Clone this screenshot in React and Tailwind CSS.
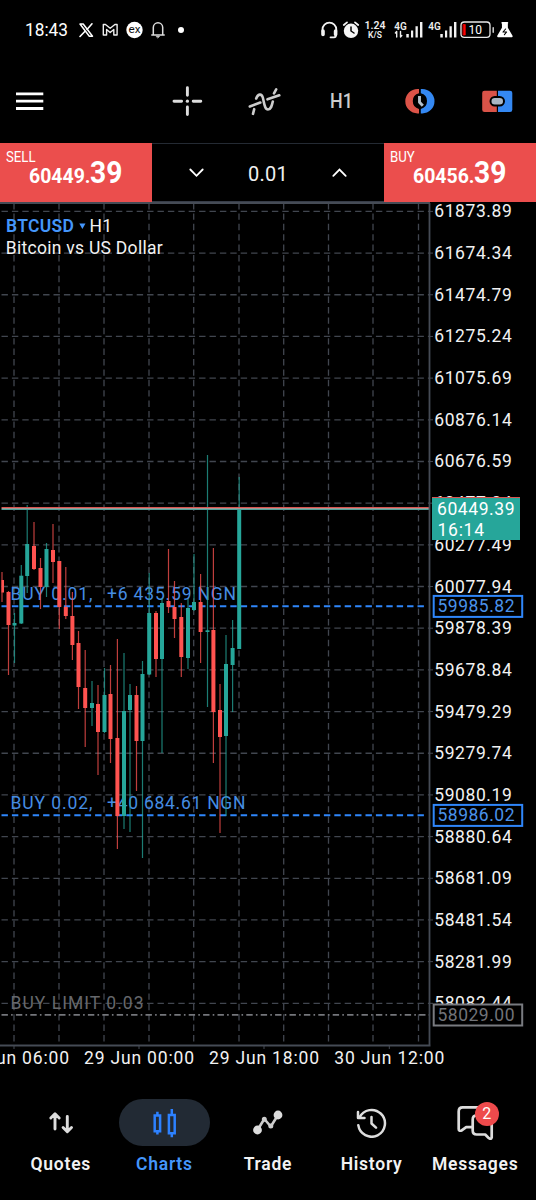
const UP = '#26a69a'
const DOWN = '#ff5350'

// [x, wick top, body top, body bottom, wick bottom, color]
const candles = [
  [2, 572, 580, 592.5, 602, DOWN],
  [8.5, 591, 592, 625, 675, DOWN],
  [14.5, 613, 623, 625.5, 663, UP],
  [21.3, 565, 575.7, 623.5, 624, UP],
  [27.2, 505, 544, 576, 593, UP],
  [34, 522, 546, 569, 570, DOWN],
  [40.5, 558, 568, 587, 609, DOWN],
  [46.5, 543, 549, 587, 597, UP],
  [53, 524, 550, 562, 583, DOWN],
  [59.3, 561, 561, 607, 629, DOWN],
  [65.8, 567, 607, 616, 619, DOWN],
  [72.4, 592, 616, 645, 660, DOWN],
  [78.5, 631, 643, 687, 709, DOWN],
  [85.2, 650, 688, 708, 747, DOWN],
  [92, 681, 703, 708, 726, UP],
  [98, 685, 704, 732, 775, DOWN],
  [104.5, 668, 695, 732, 733, UP],
  [110.5, 665, 694, 739, 763, DOWN],
  [117.4, 639, 738, 816, 849, DOWN],
  [124, 653, 711, 816, 829, UP],
  [130, 684, 695, 710, 832, UP],
  [136.5, 686, 695, 741, 791, DOWN],
  [142.5, 661, 674, 741, 858, UP],
  [149.2, 573, 613, 674.5, 675, UP],
  [156, 611, 613, 659, 677, DOWN],
  [162, 598, 603, 659, 753, UP],
  [168.5, 549, 601, 607, 613, DOWN],
  [174.5, 581, 607, 619, 638, DOWN],
  [181.3, 603, 617, 657, 677, DOWN],
  [188, 599, 608, 658, 669, UP],
  [194, 554, 602, 610, 611, UP],
  [200.6, 574, 602, 632, 663, DOWN],
  [207.5, 455, 630.3, 632, 707, UP],
  [213.4, 548, 630, 712, 763, DOWN],
  [220, 684, 710, 737, 833, DOWN],
  [226, 635, 664, 736, 816, UP],
  [232.6, 620, 648, 665, 712, UP],
  [239.2, 477, 509, 649, 649, UP],
]

const prices = [
  '61873.89', '61674.34', '61474.79', '61275.24', '61075.69', '60876.14', '60676.59',
  '60477.04', '60277.49', '60077.94', '59878.39', '59678.84', '59479.29', '59279.74',
  '59080.19', '58880.64', '58681.09', '58481.54', '58281.99', '58082.44',
]
const gridX = [14, 59, 104, 149, 193.7, 239, 283.7, 328.5, 373, 418.5]
const priceY = (i) => 211.4 + i * 41.68

const times = [
  { label: '28 Jun 06:00', x: 14 },
  { label: '29 Jun 00:00', x: 139 },
  { label: '29 Jun 18:00', x: 264 },
  { label: '30 Jun 12:00', x: 389.3 },
]

// Icon whose viewBox is given as x, y, width and height
function Icon({ box, className = '', children }) {
  return (
    <svg
      width={box[2]}
      height={box[3]}
      viewBox={box.join(' ')}
      fill="none"
      strokeLinecap="round"
      strokeLinejoin="round"
      className={`block shrink-0 ${className}`}
      aria-hidden="true"
    >
      {children}
    </svg>
  )
}

function Signal({ data }) {
  return (
    <Icon box={[394, 18, 30, 24]}>
      <text x="394.3" y="30" fontSize="10.5" fontWeight="600" fill="#eee" textLength="12.5" lengthAdjust="spacingAndGlyphs">4G</text>
      {data && <path d="M396.7 37v-5.5l-1.3 1.5M400.5 31.5v5.5l1.3-1.5" stroke="#eee" strokeWidth="1.4" />}
      <path fill="#f2f2f2" d="M406.3 34h2.5v3.5h-2.5zM411 30.5h2.2v7H411zM415.5 26.3h2.3v11.2h-2.3zM420 22h2.4v15.5H420z" />
    </Icon>
  )
}

function StatusBar() {
  return (
    <header className="flex h-[60px] shrink-0 items-center pl-[25px]">
      <span className="w-[53px] origin-left scale-x-[.96] text-[18px] leading-none">18:43</span>
      <Icon box={[78, 20, 16, 20]}>
        <path d="M80 24h3.2l9.3 12.2h-3.2z" stroke="#fff" strokeWidth="1.5" />
        <path d="M92 23.8l-5 5.7M84.8 31.5l-4.8 5" stroke="#fff" strokeWidth="1.6" />
      </Icon>
      <Icon box={[102, 20, 16, 20]} className="ml-2">
        <path d="M103.3 35V24.5h2.2l4.7 3.8 4.7-3.8h2.2V35h-3.3v-5.5l-3.6 3-3.6-3V35z" stroke="#eee" strokeWidth="1.4" />
      </Icon>
      <Icon box={[125.5, 20, 17, 20]} className="ml-[7.5px]">
        <circle cx="134" cy="30" r="8.2" fill="#fff" />
        <text x="134" y="32.7" fontSize="10" fontWeight="400" fill="#111" textAnchor="middle" textLength="12" lengthAdjust="spacingAndGlyphs">ex</text>
      </Icon>
      <Icon box={[150, 20, 16, 20]} className="ml-[7.5px]">
        <path d="M151.8 35h12.4M153.3 34.5v-7a4.7 4.7 0 0 1 9.4 0v7" stroke="#ddd" strokeWidth="1.5" />
        <path d="M156.3 36.3h3.4l-1.7 1.5z" fill="#ddd" stroke="#ddd" strokeWidth=".6" />
      </Icon>
      <span className="ml-3 size-[6px] rounded-full bg-white"></span>
      <Icon box={[320, 19, 18, 22]} className="ml-[136px]">
        <path d="M322.5 31v-1.5a6.9 6.9 0 0 1 13.8 0V31M336 34v1.3q0 2-2 2h-3.5" stroke="#f2f2f2" strokeWidth="1.8" />
        <path d="M323 31v3.5M335.6 31v3.5" stroke="#f2f2f2" strokeWidth="3.6" />
      </Icon>
      <Icon box={[342, 19, 18, 22]} className="ml-1">
        <circle cx="351" cy="30.8" r="7.2" fill="#f5f5f5" />
        <path d="M343.8 25l3.2-2.6M358.2 25l-3.2-2.6" stroke="#f5f5f5" strokeWidth="1.8" />
        <path d="M351 27v4l3 2" stroke="#000" strokeWidth="1.5" />
      </Icon>
      <div className="ml-1 mr-[8px] flex w-[22px] flex-col items-center whitespace-nowrap font-semibold text-[#eee]">
        <span className="text-[10.5px] leading-[10px]">1.24</span>
        <span className="text-[8.5px] leading-[8px]">K/S</span>
      </div>
      <Signal data />
      <span className="w-[3.7px]"></span>
      <Signal />
      <Icon box={[460, 18, 35, 24]} className="ml-[2.3px]">
        <rect x="461" y="22" width="29" height="15.3" rx="3.3" stroke="#e8e8e8" strokeWidth="1.3" />
        <path d="M463.3 24.5h2v10.5h-2z" fill="#f00" stroke="#f00" strokeWidth=".7" />
        <path d="M493.2 27.7v4.6" stroke="#ddd" strokeWidth="1.4" />
        <text x="475.3" y="34" fontSize="12" fill="#fff" textAnchor="middle">10</text>
      </Icon>
      <Icon box={[496, 18, 18, 24]} className="ml-px">
        <path d="M502.2 22.8h5.2M502.8 23v5L498 36.3h13.8L507 28v-5z" fill="#fff" stroke="#fff" strokeWidth="1.7" />
        <path d="M505.6 29l-2.6 3h3.6l-2.2 2.7" stroke="#000" strokeWidth="1.1" />
      </Icon>
    </header>
  )
}

function Toolbar() {
  return (
    <div className="flex h-[83px] shrink-0 items-center pb-px pl-[16px]">
      <Icon box={[16, 85, 28, 32]}>
        <path d="M16 93.8h27.3M16 101.1h27.3M16 108.5h27.3" stroke="#fff" strokeWidth="2.8" strokeLinecap="butt" />
      </Icon>
      <Icon box={[172, 85, 31, 32]} className="ml-[128px]">
        <path d="M174 101.2h7.6M193.2 101.2h7.6M187.4 87.7v7.6M187.4 107v7.6" stroke="#ddd" strokeWidth="2.9" />
        <circle cx="187.4" cy="101.2" r="1.6" fill="#ddd" />
      </Icon>
      <Icon box={[248, 85, 33, 32]} className="ml-[45px]">
        <path d="M253 113.8l1.2-4.6M256.2 98.5c1.500-4.500 5.300-5.500 6.600-1 1.400 5 1.700 12 5.200 12 3 0 3.800-3.500 4.800-8M274 93.300l2.200-4M249.800 106.500l10.500-4M267.500 99.300l11.800-4" stroke="#ccc" strokeWidth="2.6" />
      </Icon>
      <span className="ml-[49px] w-[25px] origin-left scale-x-[.85] text-[21px] leading-none font-medium text-[#ccc]">H1</span>
      <Icon box={[404, 85, 32, 32]} className="ml-[49px]">
        <path d="M419 89h-1.5a12.2 12.2 0 0 0 0 24.4h1.5v-4.5a8 8 0 0 1 0-15.6z" fill="#dc5348" />
        <path d="M420.8 89h1.5a12.2 12.2 0 0 1 0 24.4h-1.5v-4.5a8 8 0 0 0 0-15.6z" fill="#3488f2" />
        <path d="M419.5 96v6.2l3.3 3.6" stroke="#b4c0ca" strokeWidth="2.9" strokeLinecap="butt" />
      </Icon>
      <Icon box={[481, 85, 32, 32]} className="ml-[45px]">
        <path d="M496.8 90.7H484.5q-2.3 0-2.3 2.3v16.7q0 2.3 2.3 2.3h12.3z" fill="#d95348" />
        <path d="M498 90.7h12q2.3 0 2.3 2.3v16.7q0 2.3-2.3 2.3h-12z" fill="#3488f2" />
        <rect x="490.500" y="97" width="13.5" height="8.5" rx="4.2" fill="#a9b6c3" stroke="#000" strokeWidth="2" />
      </Icon>
    </div>
  )
}

function PriceButton({ side, price, cents }) {
  return (
    <button className="flex h-[59px] w-[152px] flex-col bg-[#eb4e4d] text-left">
      <span className="ml-[6px] mt-[7px] origin-left scale-x-[.88] text-[15px] leading-[15px]">{side}</span>
      <span className="-mt-[8px] ml-[29px] flex items-baseline font-bold leading-[31px]">
        <span className="w-[61px] origin-left scale-x-[.95] text-[20.5px]">{price}</span>
        <span className="origin-left scale-x-[.91] text-[31px]">{cents}</span>
      </span>
    </button>
  )
}

function TradePanel() {
  return (
    <div className="flex h-[59px] shrink-0">
      <PriceButton side="SELL" price="60449." cents="39" />
      <div className="flex flex-1 items-center justify-between border-t border-b border-t-[#242a33] border-b-[#363c47] px-[36px] pt-px">
        <Icon box={[188, 165, 17, 16]}>
          <path d="M190.3 169.5l6.2 6.3 6.2-6.3" stroke="#fff" strokeWidth="1.8" strokeLinejoin="miter" />
        </Icon>
        <span className="pt-px text-[20px] leading-none tracking-[.2px] text-[#f0f0f0]">0.01</span>
        <Icon box={[331, 165, 17, 16]}>
          <path d="M333.3 175.8l6.2-6.3 6.2 6.3" stroke="#fff" strokeWidth="1.8" strokeLinejoin="miter" />
        </Icon>
      </div>
      <PriceButton side="BUY" price="60456." cents="39" />
    </div>
  )
}

function PriceTag({ y, price, color, textColor }) {
  return (
    <g>
      <rect x="433.7" y={y - 10.5} width="88.5" height="21" fill="#000" stroke={color} strokeWidth="2" />
      <text x="437.5" y={y + 6} fill={textColor} textLength="77">{price}</text>
    </g>
  )
}

function Chart() {
  return (
    <svg width="536" height="878" viewBox="0 202 536 878" fontSize="17.5" className="block shrink-0" aria-label="BTCUSD H1 chart">
      <g stroke="#41464f" strokeWidth="1.3" strokeDasharray="6.4 4">
        {prices.map((p, i) => (
          <path key={p} d={`M1.5 ${priceY(i)}H429`} />
        ))}
        {gridX.map((x) => (
          <path key={x} d={`M${x} 203V1045`} />
        ))}
      </g>

      {/* Open positions and pending order */}
      <g fill="#468de2" fontWeight="400">
        <path d="M1.5 606.3H426M1.5 815.3H426" stroke="#2f86fa" strokeWidth="2" strokeDasharray="6.4 4" />
        <text x="10.5" y="600" textLength="82">BUY 0.01,</text>
        <text x="107" y="600" textLength="129">+6 435.59 NGN</text>
        <text x="10.5" y="809.3" textLength="82">BUY 0.02,</text>
        <text x="107" y="809.3" textLength="138.5">+40 684.61 NGN</text>
      </g>
      <path d="M1.5 1014.8H429" stroke="#74767b" strokeWidth="1.8" strokeDasharray="6.4 3.2 1.6 3.2" />
      <text x="10.5" y="1009" fill="#66686c" fontWeight="400" textLength="133">BUY LIMIT 0.03</text>

      {candles.map(([x, high, top, bottom, low, color]) => (
        <g key={x} fill={color}>
          <rect x={x - 0.6} y={high} width="1.2" height={low - high} opacity=".75" />
          <rect x={Math.max(x - 2, 1.5)} y={top} width={x < 3 ? 2.5 : 4} height={bottom - top} />
        </g>
      ))}

      <path d="M1.5 507.5H429" stroke="#d9534f" />
      <path d="M1.5 508.5H429" stroke="#a59c98" />
      <path d="M1.5 509.5H429" stroke="#4d9f97" />

      <path d="M0 203H430M429.5 203V1046M0 1045.5H430.5" fill="none" stroke="#454b55" strokeWidth="1.8" />

      <g fill="#f2f2f2">
        {prices.map((p, i) => (
          <g key={p}>
            <path d={`M430 ${priceY(i)}h3`} stroke="#454b55" />
            <text x="434.3" y={priceY(i) + 6} textLength="77.5">{p}</text>
          </g>
        ))}
        {times.map((t) => (
          <g key={t.label}>
            <path d={`M${t.x} 1046v3`} stroke="#454b55" />
            <text x={t.x - 55} y="1064.3" textLength="110">{t.label}</text>
          </g>
        ))}
      </g>

      {/* Current price */}
      <rect x="432" y="497" width="88" height="43" fill="#26a69a" />
      <path d="M432 497.5h88" stroke="#d9534f" />
      <g fill="#fff">
        <text x="437" y="515.2" textLength="77.5">60449.39</text>
        <text x="437.5" y="535.5" textLength="46.5">16:14</text>
      </g>
      <PriceTag y={606.4} price="59985.82" color="#2f86fa" textColor="#4a92ea" />
      <PriceTag y={815.4} price="58986.02" color="#2f86fa" textColor="#4a92ea" />
      <PriceTag y={1015} price="58029.00" color="#797b80" textColor="#717378" />

      <text x="6" y="231.7" fill="#4496fb" fontWeight="600" textLength="68">BTCUSD</text>
      <path d="M79.3 223.5h6.2l-3.1 5.5z" fill="#4496fb" />
      <g fill="#f2f2f2">
        <text x="89.5" y="231.7" textLength="22.5">H1</text>
        <text x="5.7" y="254" textLength="157">Bitcoin vs US Dollar</text>
      </g>
    </svg>
  )
}

const tabs = [
  {
    label: 'Quotes',
    box: [46, 1107, 30, 31],
    icon: <path d="M55 1129v-15M50.8 1118l4.2-4.2 4.2 4.2M67.3 1116.5v15M63.1 1127.5l4.2 4.2 4.2-4.2" stroke="#ddd" strokeWidth="2.9" />,
  },
  {
    label: 'Charts',
    active: true,
    box: [149, 1107, 31, 31],
    icon: (
      <path
        d="M154.7 1115.5h5.4v15.7h-5.4zM157.4 1111.8v3.5M157.4 1131v3.5M168.9 1115h5.8v18.3h-5.8zM171.8 1109v5.5M171.8 1133.5v3.7"
        stroke="#2d81ff"
        strokeWidth="2.5"
        strokeLinecap="butt"
        strokeLinejoin="miter"
      />
    ),
  },
  {
    label: 'Trade',
    box: [252, 1107, 31, 31],
    icon: (
      <>
        <path d="M257.5 1130l6.8-11 6.5 7.5 7.2-11.5" stroke="#ccc" strokeWidth="2.6" />
        <path d="M257.5 1130h0M278 1115h0" stroke="#ddd" strokeWidth="8.8" />
        <path d="M264.3 1119.3h0M270.8 1126h0" stroke="#ccc" strokeWidth="5" />
      </>
    ),
  },
  {
    label: 'History',
    box: [355, 1107, 33, 31],
    icon: <path d="M359.5 1117.5a13.4 13.4 0 1 1-1.2 7.7M358 1112v6h6.5M371.5 1117v6.5l4.5 4.2" stroke="#ddd" strokeWidth="2.5" />,
  },
  {
    label: 'Messages',
    badge: 2,
    box: [457, 1106, 37, 34],
    icon: (
      <path
        d="M472.5 1127.2h-6.3l-4.5 3.2q-3 1.2-3-1.5v-17.5q0-4 4-4h19.5q3.5 0 3.5 4v3M476.5 1115.5h11.5q3.7 0 3.7 4v18q-.7 2.5-3.3.2l-3.2-3.2h-8.5q-4 0-4-4v-11q0-4 3.8-4z"
        stroke="#ddd"
        strokeWidth="2.7"
      />
    ),
  },
]

function BottomNav() {
  return (
    <nav className="flex h-[120px] shrink-0 px-[9px] pt-[19px]">
      {tabs.map((tab) => (
        <button key={tab.label} className="flex w-[103.6px] shrink-0 flex-col items-center">
          <span
            className={`relative flex h-[47px] w-[91px] items-center justify-center rounded-full ${tab.active ? 'bg-[#222a34]' : ''}`}
          >
            <Icon box={tab.box}>{tab.icon}</Icon>
            {tab.badge && (
              <span className="absolute top-[3px] right-[22px] flex size-[24px] items-center justify-center rounded-full bg-[#ee4a4c] text-[16px] leading-none text-white">
                {tab.badge}
              </span>
            )}
          </span>
          <span
            className={`mt-[8px] text-[17.5px] leading-[20px] font-semibold tracking-[.75px] ${tab.active ? 'text-[#4496fb]' : 'text-[#f2f2f2]'}`}
          >
            {tab.label}
          </span>
        </button>
      ))}
    </nav>
  )
}

export default function App() {
  return (
    <div
      className="flex h-[1200px] w-[536px] flex-col overflow-hidden bg-black text-white"
      style={{ fontFamily: 'Roboto, sans-serif' }}
    >
      <StatusBar />
      <Toolbar />
      <TradePanel />
      <Chart />
      <BottomNav />
    </div>
  )
}
